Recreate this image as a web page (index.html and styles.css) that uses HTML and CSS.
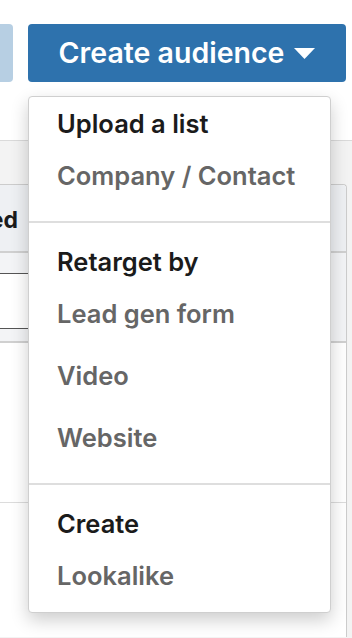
FILE: index.html
```html
<!DOCTYPE html>
<html lang="en">
<head>
  <meta charset="UTF-8">
  <meta name="viewport" content="width=device-width, initial-scale=1.0">
  <title>Audiences</title>
  <link rel="stylesheet" href="styles.css">
</head>
<body>
  <div class="topbar">
    <div class="actions">
      <button class="btn btn-light" aria-label="Manage"></button>
      <div class="menu-wrap">
        <button class="btn btn-primary">
          Create audience
          <svg class="caret" width="21" height="11" viewBox="0 0 21 11"><polygon points="0,0 21,0 10.5,11" fill="#fff"/></svg>
        </button>

        <div class="dropdown">
          <div class="section">
            <div class="section-title">Upload a list</div>
            <div class="item">Company / Contact</div>
          </div>
          <div class="section">
            <div class="section-title">Retarget by</div>
            <div class="item">Lead gen form</div>
            <div class="item">Video</div>
            <div class="item">Website</div>
          </div>
          <div class="section">
            <div class="section-title">Create</div>
            <div class="item">Lookalike</div>
          </div>
        </div>
      </div>
    </div>
  </div>

  <div class="content">
    <div class="card">
      <div class="thead">
        <div class="th">Matched</div>
      </div>
      <div class="filter-row">
        <div class="search"></div>
      </div>
      <div class="row"></div>
    </div>
  </div>
</body>
</html>
```

FILE: styles.css
```css
html, body {
  height: 100%;
  overflow: hidden;
}

body {
  margin: 0;
  font-family: Inter, "Noto Sans", sans-serif;
  background-color: #f3f3f3;
}

.topbar {
  height: 141px;
  background: #fff;
  border-bottom: 1px solid #dadada;
  box-sizing: border-box;
}

.actions {
  display: flex;
  justify-content: flex-end;
  gap: 15px;
  padding: 24px 6px 0 0;
}

.btn {
  flex-shrink: 0;
  height: 58px;
  border: none;
  border-radius: 4px;
  font-family: inherit;
  font-weight: 600;
  font-size: 28.5px;
  color: #fff;
  cursor: pointer;
}

.btn-light {
  width: 140px;
  background-color: #b7cfe3;
}

.menu-wrap {
  position: relative;
  flex-shrink: 0;
}

.btn-primary {
  width: 318px;
  display: flex;
  align-items: center;
  justify-content: center;
  gap: 10px;
  padding: 0 0 2px 0;
  background-color: #2e72ad;
}

.caret {
  margin-top: 3px;
}

.dropdown {
  position: absolute;
  top: calc(100% + 14px);
  left: 0;
  width: 303px;
  box-sizing: border-box;
  padding: 6px 0 5px;
  background: #fff;
  border: 1px solid #cfcfcf;
  border-radius: 4px;
  box-shadow: 0 7px 18px rgba(0, 0, 0, 0.2);
  z-index: 10;
}

.section + .section {
  margin-top: 14px;
  padding-top: 18px;
  border-top: 2px solid #dedede;
}

.section-title,
.item {
  padding-left: 28px;
  font-size: 25.5px;
  font-weight: 600;
  white-space: nowrap;
}

.section-title {
  height: 42px;
  line-height: 42px;
  color: #1b1b1b;
}

.item {
  height: 62px;
  line-height: 62px;
  color: #666;
}

.content {
  padding-top: 43px;
}

.card {
  margin: 0 5px 0 -20px;
  height: 453px;
  box-sizing: border-box;
  background: #fff;
  border: 1px solid #cccccc;
  border-bottom: none;
  border-radius: 4px 4px 0 0;
}

.thead {
  display: flex;
  height: 66px;
  background: #eef0f3;
  border-bottom: 2px solid #d0d0d0;
  border-radius: 4px 4px 0 0;
}

.th {
  width: 37px;
  display: flex;
  align-items: center;
  justify-content: flex-end;
  padding-top: 4px;
  font-size: 23px;
  font-weight: 700;
  color: #1b1b1b;
  white-space: nowrap;
}

.filter-row {
  height: 90px;
  padding-top: 20px;
  box-sizing: border-box;
  background: #f3f4f6;
  border-bottom: 2px solid #d0d0d0;
}

.search {
  width: 220px;
  height: 54px;
  background: #fff;
  border-top: 1px solid #555;
  border-bottom: 1px solid #555;
}

.row {
  height: 159px;
  border-bottom: 1px solid #dcdcdc;
}
```
